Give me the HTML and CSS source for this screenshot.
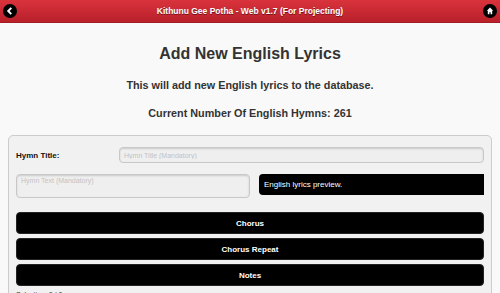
FILE: index.html
```html
<!DOCTYPE html>
<html lang="en">
<head>
  <meta charset="UTF-8" />
  <title>Add New English Lyrics</title>
  <link rel="stylesheet" href="styles.css">
</head>
<body>
  <div class="header">
    <a class="hdr-btn" href="#">
      <svg width="14" height="14" viewBox="0 0 14 14"><circle cx="7" cy="7" r="7" fill="#000"/><path d="M8.3 3.8 5.2 7l3.1 3.2" stroke="#fff" stroke-width="1.9" fill="none"/></svg>
    </a>
    <h1 class="title">Kithunu Gee Potha - Web v1.7 (For Projecting)</h1>
    <a class="hdr-btn" href="#">
      <svg width="14" height="14" viewBox="0 0 14 14"><circle cx="7" cy="7" r="7" fill="#000"/><path d="M7 3.6 3.8 6.8h1v3.4h1.6V8.2h1.2v2h1.6V6.8h1z" fill="#fff"/></svg>
    </a>
  </div>

  <div class="content">
    <h2 class="page-title">Add New English Lyrics</h2>
    <p class="lead">This will add new English lyrics to the database.</p>
    <p class="lead count">Current Number Of English Hymns: 261</p>

    <div class="card">
      <div class="row">
        <label class="lbl">Hymn Title:</label>
        <input class="field" type="text" placeholder="Hymn Title (Mandatory)">
      </div>
      <div class="row split">
        <textarea class="field area" placeholder="Hymn Text (Mandatory)"></textarea>
        <div class="preview">English lyrics preview.</div>
      </div>
      <div class="buttons">
        <button class="btn">Chorus</button>
        <button class="btn">Chorus Repeat</button>
        <button class="btn">Notes</button>
      </div>
      <p class="sel">Selection: 0 / 0</p>
    </div>
  </div>
</body>
</html>
```

FILE: styles.css
```css
* {
  margin: 0;
  padding: 0;
  box-sizing: border-box;
  font-family: "Liberation Sans", Arial, sans-serif;
}

body {
  background: #f9f9f9;
  color: #333;
  overflow: hidden;
}

.header {
  height: 23px;
  display: flex;
  align-items: center;
  justify-content: space-between;
  padding: 0 3px;
  background: linear-gradient(#d9333d, #b8202a);
  border-bottom: 1px solid #a31c24;
}

.hdr-btn {
  display: flex;
  width: 14px;
  height: 14px;
}

.title {
  font-size: 8.5px;
  font-weight: bold;
  color: #fff;
  text-shadow: 0 1px 0 #7a1017;
}

.content {
  padding: 0 8px;
}

.page-title {
  text-align: center;
  font-size: 16px;
  font-weight: bold;
  color: #333;
  margin-top: 22px;
}

.lead {
  text-align: center;
  font-size: 10.8px;
  font-weight: bold;
  color: #333;
  margin-top: 16px;
}

.count {
  margin-top: 16px;
}

.card {
  margin-top: 16px;
  border: 1px solid #ccc;
  border-radius: 5px;
  background: #f2f1f1;
  padding: 11px 7px 0;
}

.row {
  display: flex;
  align-items: center;
}

.lbl {
  width: 103px;
  font-size: 8px;
  font-weight: bold;
  color: #111;
}

.field {
  flex: 1;
  height: 16px;
  border: 1px solid #c8c8c8;
  border-radius: 4px;
  background: #f0eff0;
  box-shadow: inset 0 1px 2px rgba(0, 0, 0, 0.15);
  font-size: 7px;
  padding: 2px 4px;
  color: #333;
}

.field::placeholder {
  color: #c2c2c2;
}

.split {
  margin-top: 11px;
  gap: 9px;
  align-items: flex-start;
}

.area {
  flex: 0 0 50%;
  height: 24px;
  resize: none;
  font-family: "Liberation Sans", Arial, sans-serif;
}

.preview {
  flex: 1;
  height: 21px;
  background: #000;
  color: #fff;
  font-size: 8px;
  border-radius: 4px 0 0 4px;
  padding: 6px 5px;
}

.buttons {
  margin-top: 14px;
  display: flex;
  flex-direction: column;
  gap: 4px;
}

.btn {
  height: 22px;
  background: #000;
  color: #fff;
  border: 1px solid #222;
  border-radius: 4px;
  font-size: 8px;
  font-weight: bold;
}

.sel {
  font-size: 7px;
  color: #333;
  margin-top: 5px;
}
```
